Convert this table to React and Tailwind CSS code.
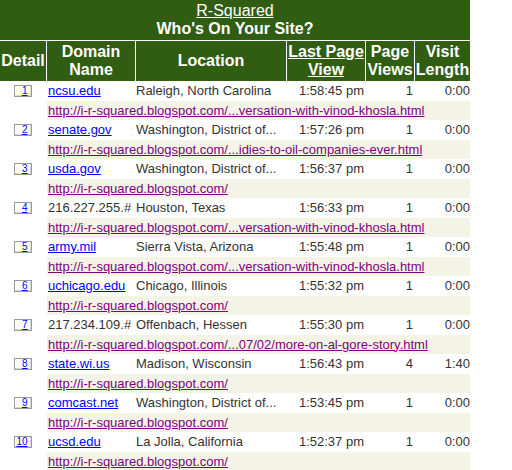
const rows = [
  { n: 1, domain: 'ncsu.edu', link: true, loc: 'Raleigh, North Carolina', time: '1:58:45 pm', views: '1', len: '0:00', url: 'http://i-r-squared.blogspot.com/...versation-with-vinod-khosla.html' },
  { n: 2, domain: 'senate.gov', link: true, loc: 'Washington, District of...', time: '1:57:26 pm', views: '1', len: '0:00', url: 'http://i-r-squared.blogspot.com/...idies-to-oil-companies-ever.html' },
  { n: 3, domain: 'usda.gov', link: true, loc: 'Washington, District of...', time: '1:56:37 pm', views: '1', len: '0:00', url: 'http://i-r-squared.blogspot.com/' },
  { n: 4, domain: '216.227.255.#', link: false, loc: 'Houston, Texas', time: '1:56:33 pm', views: '1', len: '0:00', url: 'http://i-r-squared.blogspot.com/...versation-with-vinod-khosla.html' },
  { n: 5, domain: 'army.mil', link: true, loc: 'Sierra Vista, Arizona', time: '1:55:48 pm', views: '1', len: '0:00', url: 'http://i-r-squared.blogspot.com/...versation-with-vinod-khosla.html' },
  { n: 6, domain: 'uchicago.edu', link: true, loc: 'Chicago, Illinois', time: '1:55:32 pm', views: '1', len: '0:00', url: 'http://i-r-squared.blogspot.com/' },
  { n: 7, domain: '217.234.109.#', link: false, loc: 'Offenbach, Hessen', time: '1:55:30 pm', views: '1', len: '0:00', url: 'http://i-r-squared.blogspot.com/...07/02/more-on-al-gore-story.html' },
  { n: 8, domain: 'state.wi.us', link: true, loc: 'Madison, Wisconsin', time: '1:56:43 pm', views: '4', len: '1:40', url: 'http://i-r-squared.blogspot.com/' },
  { n: 9, domain: 'comcast.net', link: true, loc: 'Washington, District of...', time: '1:53:45 pm', views: '1', len: '0:00', url: 'http://i-r-squared.blogspot.com/' },
  { n: 10, domain: 'ucsd.edu', link: true, loc: 'La Jolla, California', time: '1:52:37 pm', views: '1', len: '0:00', url: 'http://i-r-squared.blogspot.com/' },
];

const th = 'bg-[#315d13] text-white font-bold text-[16px] leading-[18px] flex items-center justify-center text-center';

export default function App() {
  return (
    <div className="w-[512px] h-[470px] overflow-hidden bg-white font-['Liberation_Sans',Arial,sans-serif]">
      <div className="w-[470px] grid grid-cols-[46px_88px_150px_78px_48px_55px] gap-x-px">
        {/* title */}
        <div className="col-span-6 h-[40px] bg-[#315d13] flex flex-col items-center justify-center text-white text-[16px] leading-[18px]">
          <span className="underline">R-Squared</span>
          <span className="font-bold">Who's On Your Site?</span>
        </div>
        <div className="col-span-6 h-px" />

        {/* column headers */}
        <div className={`${th} h-[40px]`}>Detail</div>
        <div className={th}>Domain<br />Name</div>
        <div className={th}>Location</div>
        <div className={th}><span className="underline">Last Page<br />View</span></div>
        <div className={th}>Page<br />Views</div>
        <div className={th}>Visit<br />Length</div>

        {rows.map(r => (
          <Row key={r.n} r={r} />
        ))}
      </div>
    </div>
  );
}

function Row({ r }) {
  return (
    <>
      <div className="h-[20px] flex items-center justify-center">
        <span className="w-[18px] h-[12px] border border-[#9a9a9a] shadow-[inset_-1px_-1px_0_#d8d8d8] bg-white flex items-end justify-center text-[10px] leading-[10px] text-[#0000ff]">
          <span className="underline w-[15px] text-right pr-[3px]">{r.n}</span>
        </span>
      </div>
      <div className="h-[20px] flex items-center text-[13px] pl-px whitespace-nowrap">
        {r.link
          ? <span className="text-[#0000ff] underline">{r.domain}</span>
          : <span className="text-[#333]">{r.domain}</span>}
      </div>
      <div className="h-[20px] flex items-center text-[13px] text-[#333] whitespace-nowrap overflow-hidden">{r.loc}</div>
      <div className="h-[20px] flex items-center justify-end pr-px text-[13px] text-[#333] whitespace-nowrap">{r.time}</div>
      <div className="h-[20px] flex items-center justify-end pr-px text-[13px] text-[#333]">{r.views}</div>
      <div className="h-[20px] flex items-center justify-end text-[13px] text-[#333]">{r.len}</div>

      <div className="h-[19px]" />
      <div className="col-span-5 h-[19px] bg-[#f4f4e6] flex items-center pl-px text-[13px] whitespace-nowrap overflow-hidden">
        <span className="text-[#800080] underline">{r.url}</span>
      </div>
    </>
  );
}
